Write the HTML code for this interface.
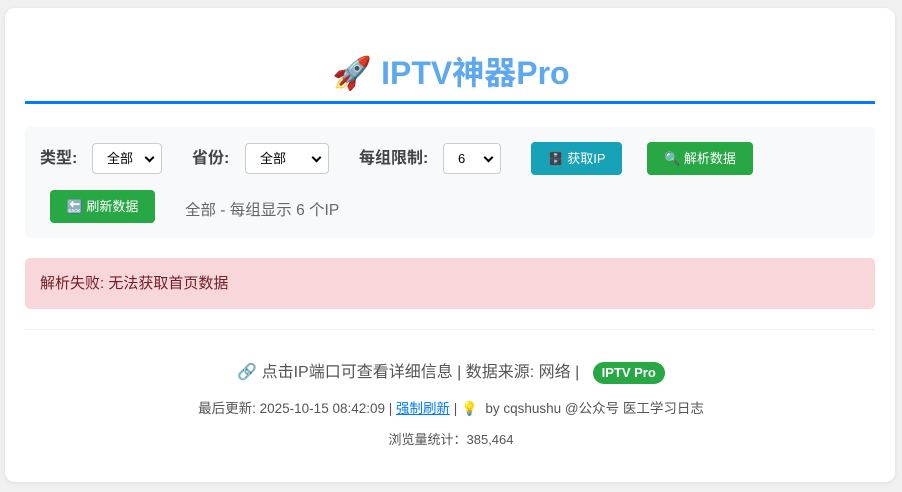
<!DOCTYPE html>
<html><head><meta charset="utf-8"><style>
*{box-sizing:border-box;margin:0;padding:0}
body{width:902px;height:492px;background:#f0f0f0;font-family:"Liberation Sans","Noto Sans CJK SC",sans-serif;position:relative;overflow:hidden}
.card{position:absolute;left:5px;top:8px;width:890px;height:474px;background:#fff;border-radius:10px;box-shadow:0 1px 4px rgba(0,0,0,.08)}
.abs{position:absolute}
h1{position:absolute;left:0;width:902px;top:51px;text-align:center;font-size:32px;color:#5ea8f0;font-weight:bold;line-height:44px}
.line{left:25px;top:101px;width:850px;height:3px;background:#007bff}
.panel{left:25px;top:127px;width:850px;height:111px;background:#f8f9fa;border-radius:5px}
.lbl{font-size:16px;font-weight:bold;color:#444;line-height:20px}
.sel{height:31px;border:1px solid #ccc;border-radius:4px;background:#fff;font-size:13px;color:#000;padding-left:14px;line-height:29px}
.sel:after{content:"";position:absolute;right:8px;top:10px;width:5px;height:5px;border-right:2px solid #000;border-bottom:2px solid #000;transform:rotate(45deg)}
.btn{height:33px;border-radius:4px;color:#fff;font-size:13px;text-align:center;line-height:33px}
.alert{left:25px;top:258px;width:850px;height:51px;background:#f8d7da;border-radius:5px;color:#721c24;font-size:15px;line-height:51px;padding-left:15px}
.hr{left:25px;top:329px;width:850px;height:1px;background:#eee}
.c{left:0;width:902px;text-align:center;color:#555}
</style></head><body>
<div class="card"></div>
<h1>🚀 IPTV神器Pro</h1>
<div class="abs line"></div>
<div class="abs panel"></div>
<div class="abs lbl" style="left:40px;top:149px">类型:</div>
<div class="abs sel" style="left:92px;top:143px;width:70px">全部</div>
<div class="abs lbl" style="left:192px;top:149px">省份:</div>
<div class="abs sel" style="left:245px;top:143px;width:84px">全部</div>
<div class="abs lbl" style="left:359px;top:149px">每组限制:</div>
<div class="abs sel" style="left:443px;top:143px;width:58px">6</div>
<div class="abs btn" style="left:531px;top:142px;width:91px;background:#17a2b8">🗄️ 获取IP</div>
<div class="abs btn" style="left:647px;top:142px;width:106px;background:#28a745">🔍 解析数据</div>
<div class="abs btn" style="left:50px;top:190px;width:105px;background:#28a745">🔙 刷新数据</div>
<div class="abs" style="left:185px;top:198px;font-size:15.5px;color:#666">全部 - 每组显示 6 个IP</div>
<div class="abs alert">解析失败: 无法获取首页数据</div>
<div class="abs hr"></div>
<div class="abs c" style="top:362px;font-size:16px;line-height:22px">🔗 点击IP端口可查看详细信息 | 数据来源: 网络 | &nbsp;&nbsp;<span style="display:inline-block;background:#28a745;color:#fff;border-radius:12px;font-size:13px;font-weight:bold;padding:0 9px;line-height:22px">IPTV Pro</span></div>
<div class="abs c" style="top:400px;font-size:13.5px;line-height:17px">最后更新: 2025-10-15 08:42:09 | <span style="color:#007bff;text-decoration:underline">强制刷新</span> | 💡 &nbsp;by cqshushu @公众号 医工学习日志</div>
<div class="abs c" style="top:431px;font-size:13px;line-height:17px">浏览量统计：385,464</div>
</body></html>
